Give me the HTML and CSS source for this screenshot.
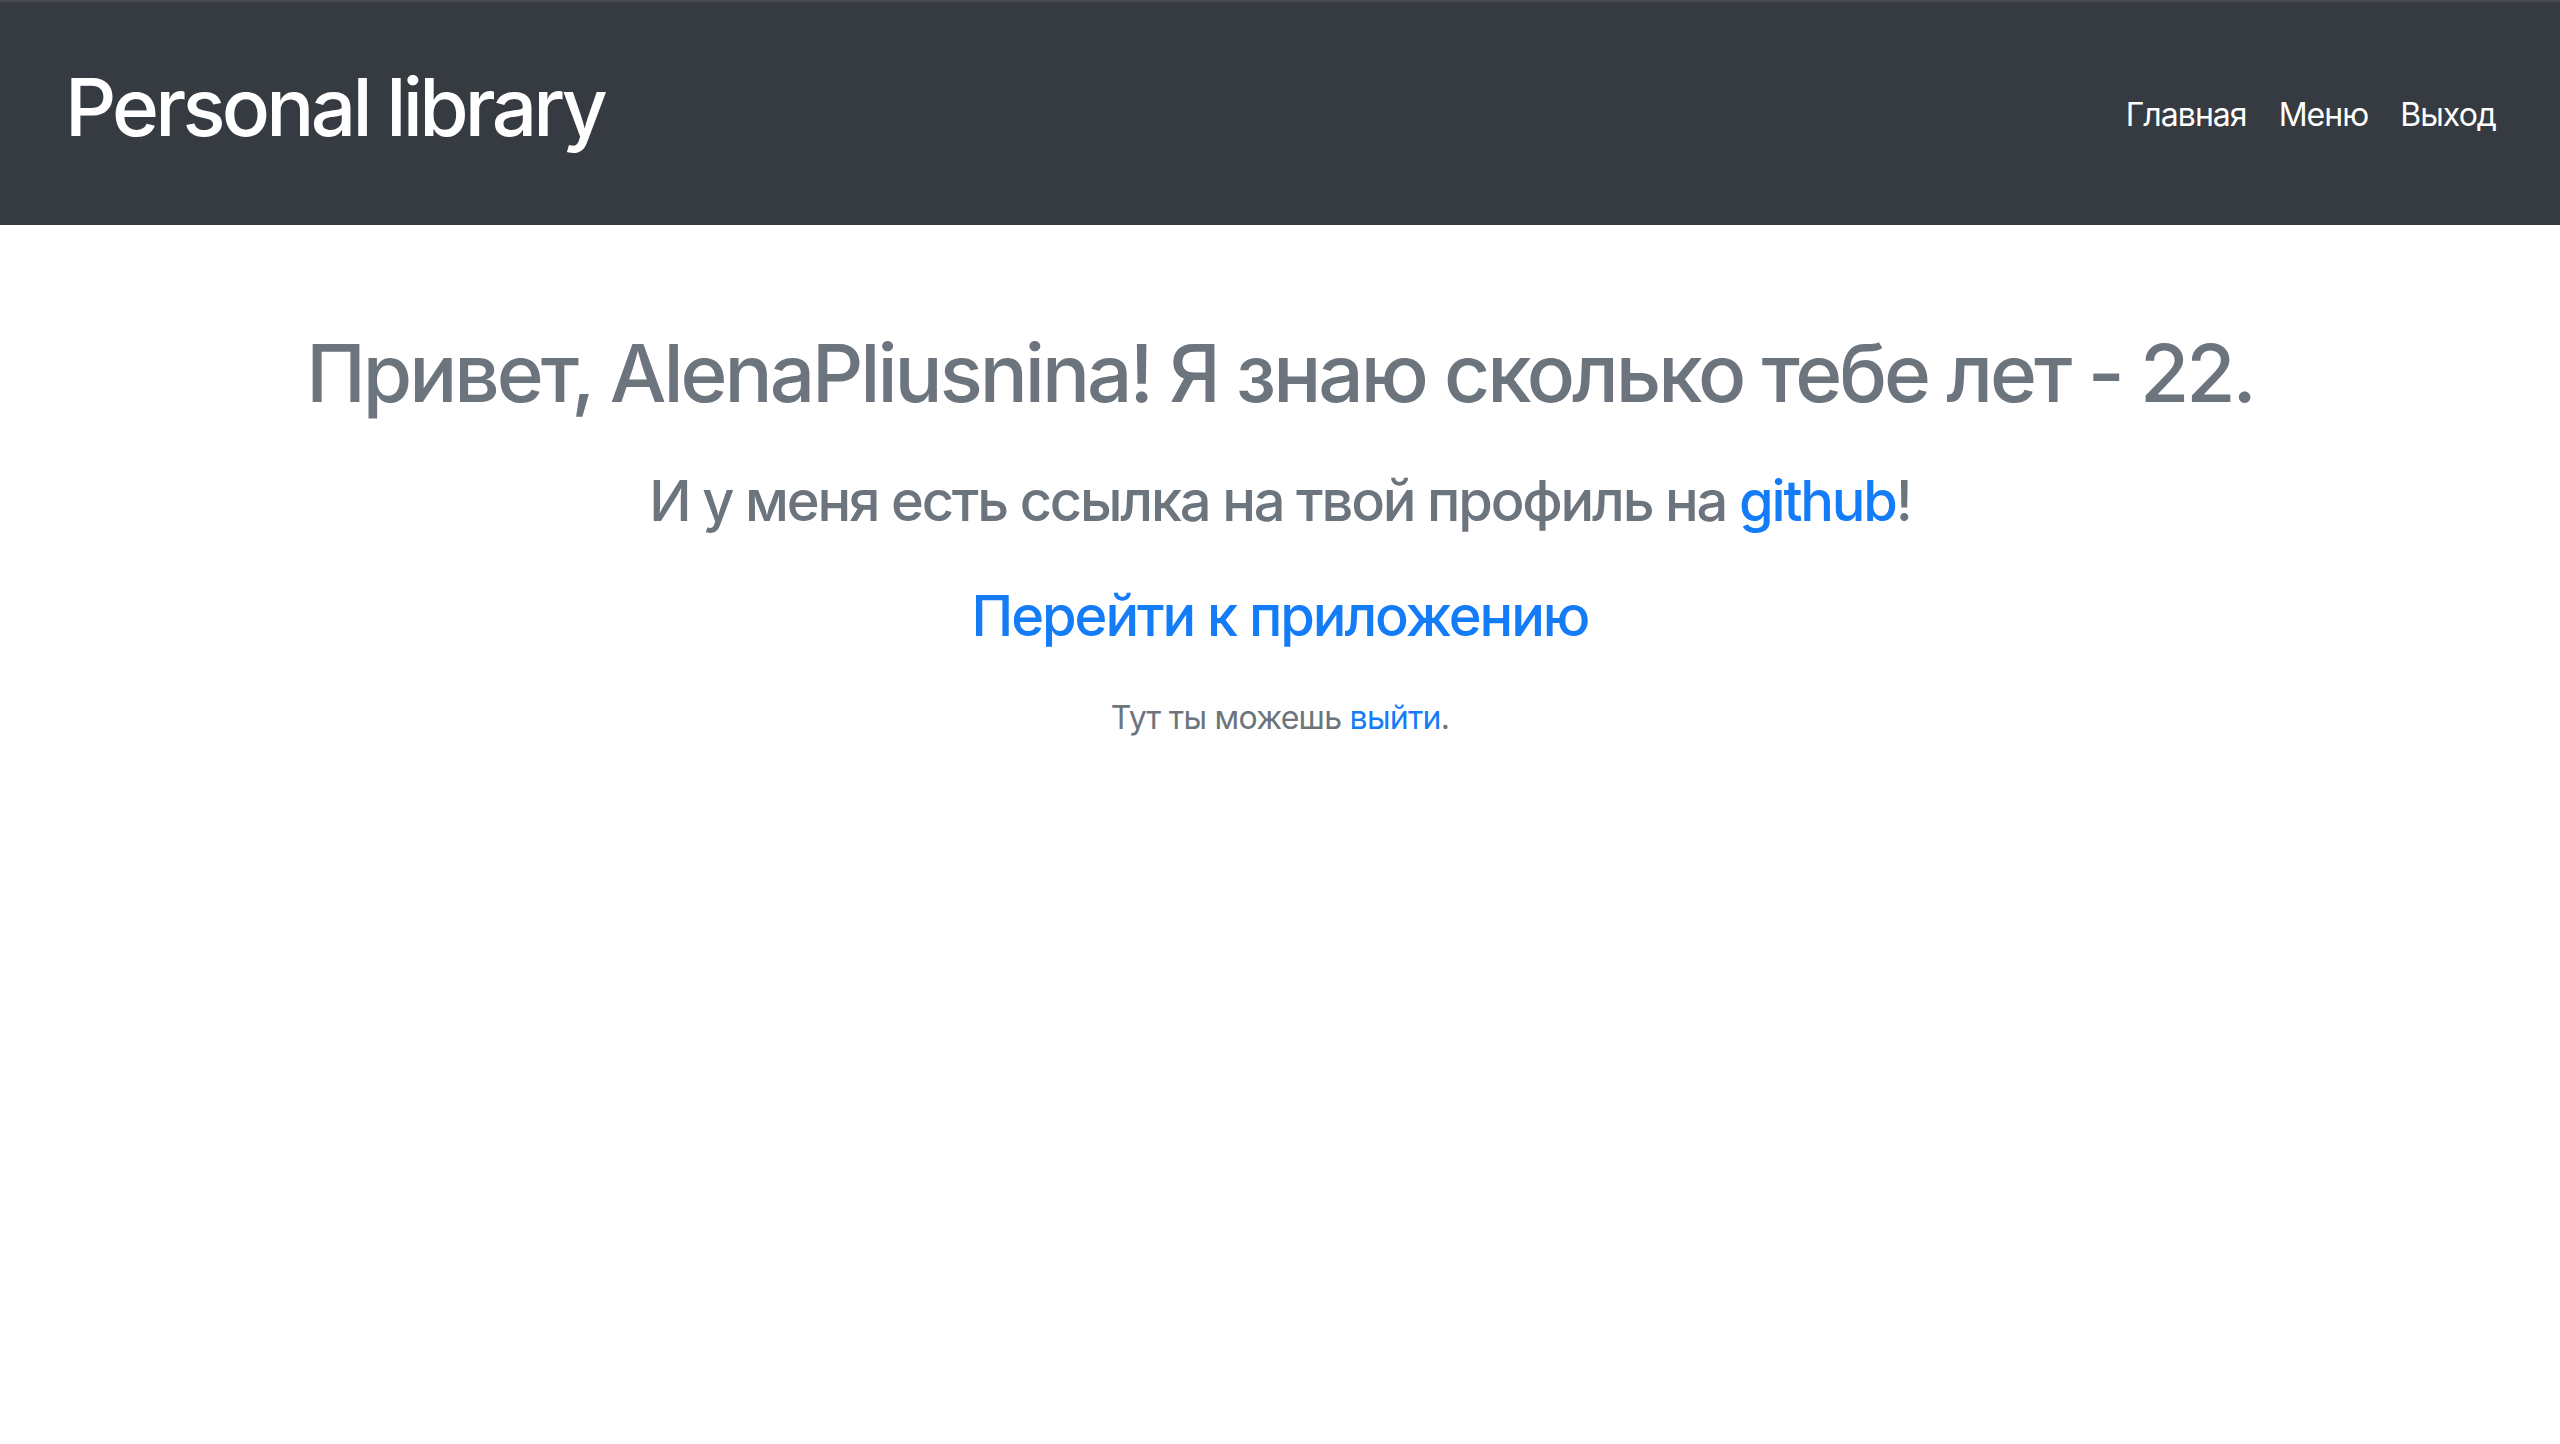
FILE: index.html
```html
<!DOCTYPE html>
<html lang="ru">
<head>
<meta charset="utf-8">
<title>Personal library</title>
<link rel="stylesheet" href="styles.css">
</head>
<body>
<header class="navbar">
  <a class="brand" href="#">Personal library</a>
  <nav class="nav">
    <a class="nav-link" href="#">Главная</a>
    <a class="nav-link" href="#">Меню</a>
    <a class="nav-link" href="#">Выход</a>
  </nav>
</header>
<main class="content">
  <h1 class="greeting">Привет, AlenaPliusnina! Я знаю сколько тебе лет - 22.</h1>
  <h3 class="profile">И у меня есть ссылка на твой профиль на <a href="#">github</a>!</h3>
  <h3 class="app-link"><a href="#">Перейти к приложению</a></h3>
  <p class="logout">Тут ты можешь <a href="#">выйти</a>.</p>
</main>
</body>
</html>
```

FILE: styles.css
```css
html, body {
  margin: 0;
  padding: 0;
  background: #ffffff;
}

body {
  font-family: Inter, "Noto Sans", "DejaVu Sans", sans-serif;
  color: #212529;
}

a {
  text-decoration: none;
  color: #157cf8;
}

.navbar {
  box-sizing: border-box;
  height: 225px;
  background: #363a41;
  border-top: 2px solid #46494f;
  display: flex;
  align-items: center;
  justify-content: space-between;
  padding: 0 48px 0 65px;
}

.brand {
  color: #ffffff;
  font-size: 80px;
  font-weight: 500;
  line-height: 1.2;
  letter-spacing: -0.047em;
  margin-top: -13px;
}

.nav {
  display: flex;
  align-items: center;
  margin-top: 2px;
}

.nav-link {
  color: #ffffff;
  font-size: 32px;
  line-height: 1.5;
  letter-spacing: -0.03em;
  padding: 0 16px;
}

.content {
  text-align: center;
  color: #6c757d;
}

.greeting {
  font-size: 80px;
  font-weight: 500;
  line-height: 1.2;
  letter-spacing: -0.038em;
  margin: 100px 0 47px;
}

.profile,
.app-link {
  font-size: 56px;
  font-weight: 500;
  line-height: 1.2;
  letter-spacing: -0.039em;
  margin: 0 0 48px;
}

.app-link {
  letter-spacing: -0.037em;
  margin-bottom: 44px;
}

.logout {
  font-size: 32px;
  line-height: 1.5;
  letter-spacing: -0.023em;
  margin: 0;
}
```
